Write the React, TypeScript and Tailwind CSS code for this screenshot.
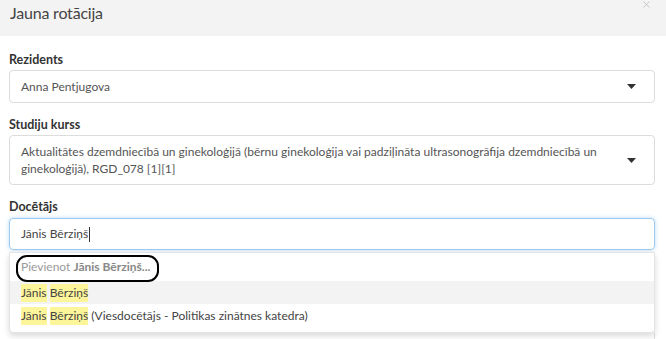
import { X } from "lucide-react";

const Caret = () => (
  <svg width="9" height="5" viewBox="0 0 9 5" className="shrink-0">
    <path d="M0 0h9L4.5 5z" fill="#333" />
  </svg>
);

const Hl = ({ children }: { children: React.ReactNode }) => (
  <span className="bg-[#fdf59a]">{children}</span>
);

export default function App() {
  return (
    <div className="relative h-[339px] w-[666px] overflow-hidden bg-white font-['Lato',sans-serif] text-[12px] text-[#555]">
      {/* Header */}
      <div className="relative flex h-[36px] items-start bg-[#f4f3f3] px-[10px] pt-[3px]">
        <h1 className="text-[16px] leading-[20px] tracking-[-0.2px] text-[#444]">Jauna rotācija</h1>
        <X className="absolute right-[14px] top-[-1px] h-[11px] w-[11px] text-[#c4c4c4]" strokeWidth={2} />
      </div>

      <div className="px-[9px] pr-[11px]">
        {/* Rezidents */}
        <label className="mt-[15px] mb-[1px] block h-[18px] text-[12.5px] leading-[18px] font-bold text-[#333]">Rezidents</label>
        <div className="flex h-[33px] items-center justify-between rounded-[4px] border border-[#dcdcdc] pl-[11px] pr-[18px]">
          <span>Anna Pentjugova</span>
          <Caret />
        </div>

        {/* Studiju kurss */}
        <label className="mt-[13px] mb-[1px] block h-[18px] text-[12.5px] leading-[18px] font-bold text-[#333]">Studiju kurss</label>
        <div className="flex h-[50px] items-center justify-between rounded-[4px] border border-[#dcdcdc] pl-[11px] pr-[18px]">
          <span className="leading-[17px]">
            Aktualitātes dzemdniecībā un ginekoloģijā (bērnu ginekoloģija vai padziļināta ultrasonogrāfija dzemdniecībā un
            <br />
            ginekoloģijā), RGD_078 [1][1]
          </span>
          <Caret />
        </div>

        {/* Docētājs */}
        <label className="mt-[13px] mb-[2px] block h-[18px] text-[12.5px] leading-[18px] font-bold text-[#333]">Docētājs</label>
        <div className="flex h-[32px] items-center rounded-[4px] border border-[#9dcaee] pl-[11px] shadow-[0_0_4px_rgba(102,175,233,0.45)]">
          <span className="text-[#444]">Jānis Bērziņš</span>
          <span className="ml-[1px] h-[15px] w-px bg-[#333]" />
        </div>

        {/* Dropdown */}
        <div className="relative mt-[2px] rounded-b-[4px] border border-[#e4e4e4] bg-white pb-[5px] shadow-[0_3px_6px_rgba(0,0,0,0.15)]">
          <div className="flex h-[28px] items-center pl-[11px] text-[#999]">
            Pievienot&nbsp;<b className="text-[#888]">Jānis Bērziņš...</b>
          </div>
          <div className="flex h-[23px] items-center bg-[#f3f3f3] pl-[11px] text-[#444]">
            <Hl>Jānis</Hl>&nbsp;<Hl>Bērziņš</Hl>
          </div>
          <div className="flex h-[23px] items-center pl-[11px] text-[#444]">
            <Hl>Jānis</Hl>&nbsp;<Hl>Bērziņš</Hl>&nbsp;(Viesdocētājs - Politikas zinātnes katedra)
          </div>
          {/* hand-drawn annotation */}
          <div className="pointer-events-none absolute left-[6px] top-[2px] h-[27px] w-[143px] rounded-[11px] border-2 border-black" />
        </div>
        <div className="ml-auto h-[10px] w-px bg-[#ddd]" />
      </div>
    </div>
  );
}
